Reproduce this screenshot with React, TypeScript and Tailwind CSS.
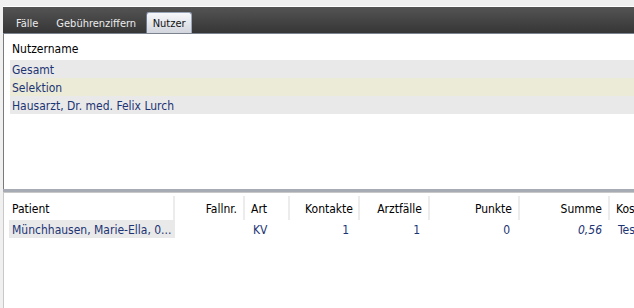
const tabs = ["Fälle", "Gebührenziffern", "Nutzer"];

const users = [
  { name: "Gesamt", bg: "bg-[#e9e9e9]" },
  { name: "Selektion", bg: "bg-[#ebebd7]" },
  { name: "Hausarzt, Dr. med. Felix Lurch", bg: "bg-[#e9e9e9]" },
];

const columns = [
  { label: "Patient", w: "w-[166px]", head: "justify-start pl-[3px]", cell: "justify-start pl-[3px]" },
  { label: "Fallnr.", w: "w-[70px]", head: "justify-end pr-[6px]", cell: "justify-end pr-[12px]" },
  { label: "Art", w: "w-[45px]", head: "justify-start pl-[6px]", cell: "justify-start pl-[6px]" },
  { label: "Kontakte", w: "w-[70px]", head: "justify-end pr-[5px]", cell: "justify-end pr-[13px]" },
  { label: "Arztfälle", w: "w-[70px]", head: "justify-end pr-[6px]", cell: "justify-end pr-[12px]" },
  { label: "Punkte", w: "w-[90px]", head: "justify-end pr-[6px]", cell: "justify-end pr-[12px]" },
  { label: "Summe", w: "w-[90px]", head: "justify-end pr-[6px]", cell: "justify-end pr-[10px]" },
  { label: "Kostenträger", w: "w-[90px]", head: "justify-start pl-[6px]", cell: "justify-start pl-[6px]" },
];

const row = ["Münchhausen, Marie-Ella, 0...", "", "KV", "1", "1", "0", "0,56", "Testkasse"];

export default function App() {
  return (
    <div className="w-[634px] h-[308px] overflow-hidden bg-[#f0f0f0] pt-[6px] pl-[3px] flex flex-col font-['DejaVu_Sans_Condensed','DejaVu_Sans',sans-serif] font-stretch-condensed text-[12px] leading-none">
      <div className="w-[800px] border-t border-white h-[28px] bg-gradient-to-b from-[#545454] to-[#363636] border-b border-b-[#7c838f] flex items-end pl-[4px] text-[11px]">
        {tabs.map((t) =>
          t === "Nutzer" ? (
            <div
              key={t}
              className="ml-[1px] h-[21px] w-[46px] pt-[1px] rounded-t-[3px] border border-b-0 border-[#9aa6ba] border-l-[#6d7a90] bg-gradient-to-b from-[#f6f8fb] to-[#d2d6dd] flex items-center justify-center text-[#111]"
            >
              {t}
            </div>
          ) : (
            <div key={t} className="h-[21px] pt-[1px] px-[9px] flex items-center text-[#ececec]">
              {t}
            </div>
          )
        )}
      </div>

      <div className="w-[800px] h-[155px] bg-white border-l border-[#7a7a7a] pl-[6px] flex flex-col">
        <div className="h-[26px] pl-[2px] pt-[4px] flex items-center text-black">Nutzername</div>
        {users.map((u) => (
          <div key={u.name} className={`h-[18px] pl-[2px] pt-[1px] flex items-center text-[#1c3474] ${u.bg}`}>
            {u.name}
          </div>
        ))}
      </div>

      <div className="w-[800px] h-[3px] bg-[#a7abb3]" />

      <div className="w-[800px] flex-1 bg-white border-l border-t border-[#c8c8c8] pl-[5px] pt-[3px] flex flex-col">
        <div className="flex h-[24px]">
          {columns.map((c) => (
            <div key={c.label} className={`${c.w} shrink-0 flex items-center pt-[1px] border-r-2 border-[#ececec] text-black ${c.head}`}>
              {c.label}
            </div>
          ))}
        </div>
        <div className="flex h-[18px] text-[#1c3474]">
          {columns.map((c, i) => (
            <div
              key={c.label}
              className={`${c.w} shrink-0 flex items-center pt-[1px] ${c.cell} ${i === 0 ? "bg-[#e9e9e9] mr-[2px] w-[164px]" : ""} ${i === 6 ? "italic" : ""}`}
            >
              {row[i]}
            </div>
          ))}
        </div>
      </div>
    </div>
  );
}
